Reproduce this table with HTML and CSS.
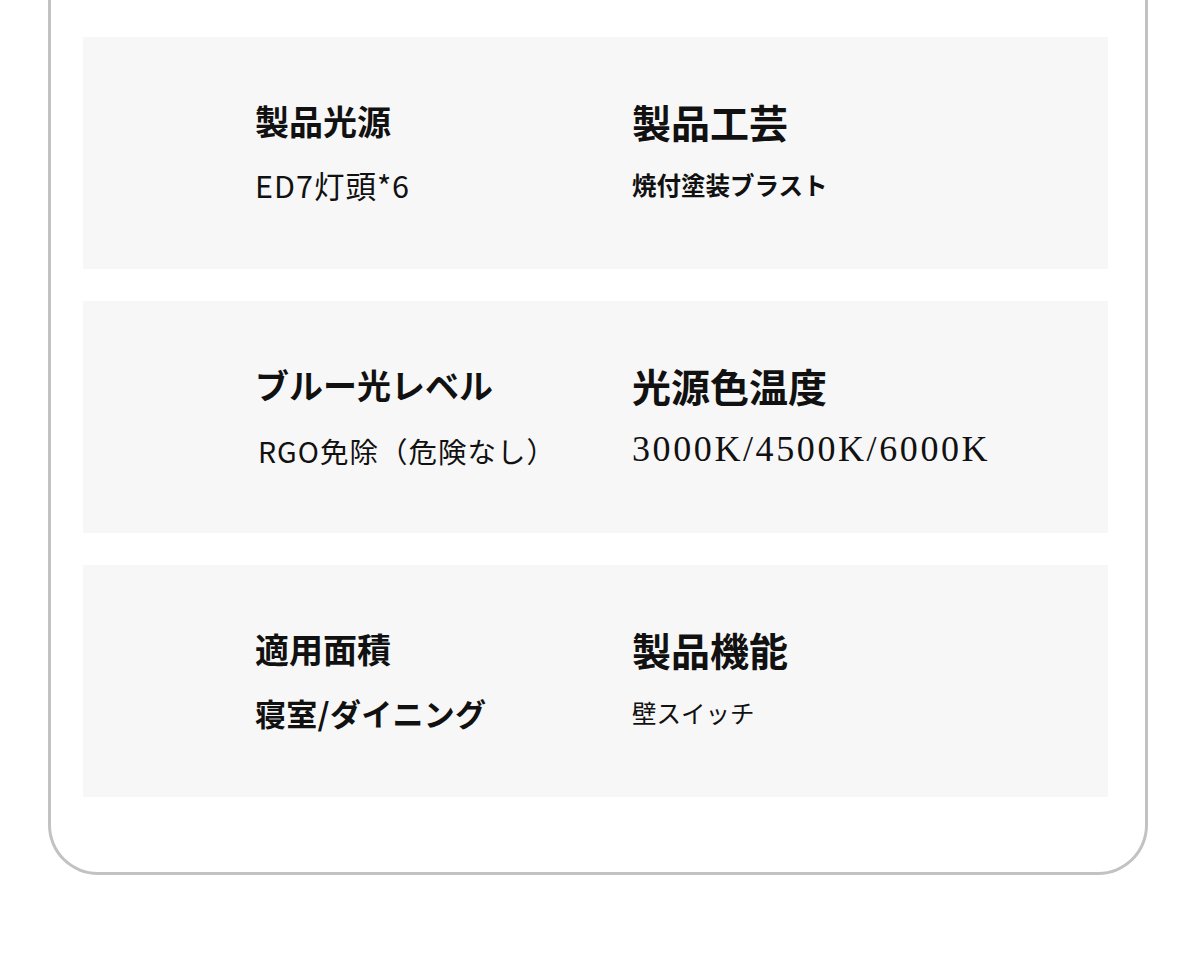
FILE: index.html
```html
<!DOCTYPE html>
<html lang="ja">
<head>
<meta charset="utf-8">
<title>製品仕様</title>
<link rel="stylesheet" href="styles.css">
</head>
<body>
<div class="card">
  <section class="panel">
    <div class="cell">
      <div class="title t-left">製品光源</div>
      <div class="value v-ed7">ED7灯頭*6</div>
    </div>
    <div class="cell">
      <div class="title t-right">製品工芸</div>
      <div class="value v-bold-sm">焼付塗装ブラスト</div>
    </div>
  </section>
  <section class="panel">
    <div class="cell">
      <div class="title t-left">ブルー光レベル</div>
      <div class="value v-rgo">RGO免除（危険なし）</div>
    </div>
    <div class="cell">
      <div class="title t-right">光源色温度</div>
      <div class="value v-serif">3000K/4500K/6000K</div>
    </div>
  </section>
  <section class="panel">
    <div class="cell">
      <div class="title t-left">適用面積</div>
      <div class="value v-bold-lg">寝室/ダイニング</div>
    </div>
    <div class="cell">
      <div class="title t-right">製品機能</div>
      <div class="value v-small">壁スイッチ</div>
    </div>
  </section>
</div>
</body>
</html>
```

FILE: styles.css
```css
html, body {
  margin: 0;
  padding: 0;
  background: #ffffff;
}

body {
  font-family: "Noto Sans CJK JP", "Noto Sans", sans-serif;
  color: #111111;
}

.card {
  box-sizing: border-box;
  width: 1100px;
  margin-left: 48px;
  border: 3px solid #c2c2c2;
  border-top: none;
  border-radius: 0 0 50px 50px;
  padding: 37px 37px 75px 32px;
  display: flex;
  flex-direction: column;
  gap: 32px;
}

.panel {
  height: 232px;
  background: #f7f7f7;
  display: grid;
  grid-template-columns: 377px 1fr;
  padding-left: 172px;
  padding-top: 62px;
  box-sizing: border-box;
}

.cell {
  display: flex;
  flex-direction: column;
  gap: 22px;
}

.title {
  font-weight: 700;
  line-height: 44px;
  white-space: nowrap;
}

.t-left {
  font-size: 34px;
}

.t-right {
  font-size: 39px;
}

.value {
  line-height: 40px;
  white-space: nowrap;
}

.v-ed7 {
  font-size: 30.5px;
  letter-spacing: 1px;
  font-weight: 400;
}

.v-rgo {
  font-size: 28.5px;
  letter-spacing: 1px;
  font-weight: 400;
  margin-left: 3px;
  margin-top: 2px;
}

.v-bold-sm {
  font-size: 24.5px;
  font-weight: 700;
}

.v-bold-lg {
  font-size: 31px;
  font-weight: 700;
  letter-spacing: 0.3px;
}

.v-small {
  font-size: 24.5px;
  font-weight: 400;
}

.v-serif {
  font-family: "Liberation Serif", "Times New Roman", serif;
  font-size: 36px;
  letter-spacing: 2.6px;
  font-weight: 400;
}
```
